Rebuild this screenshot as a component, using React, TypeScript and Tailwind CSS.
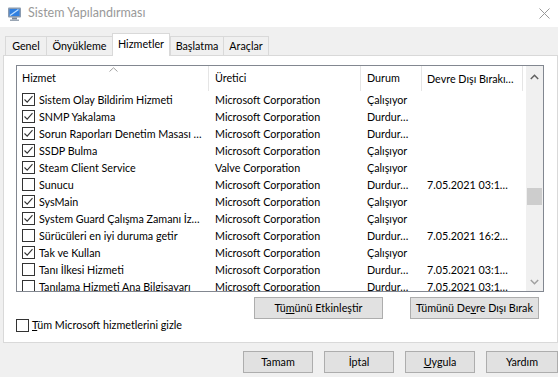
const rows: [boolean, string, string, string, string][] = [
  [true, "Sistem Olay Bildirim Hizmeti", "Microsoft Corporation", "Çalışıyor", ""],
  [true, "SNMP Yakalama", "Microsoft Corporation", "Durdur…", ""],
  [true, "Sorun Raporları Denetim Masası …", "Microsoft Corporation", "Durdur…", ""],
  [true, "SSDP Bulma", "Microsoft Corporation", "Çalışıyor", ""],
  [true, "Steam Client Service", "Valve Corporation", "Çalışıyor", ""],
  [false, "Sunucu", "Microsoft Corporation", "Durdur…", "7.05.2021 03:1…"],
  [true, "SysMain", "Microsoft Corporation", "Çalışıyor", ""],
  [true, "System Guard Çalışma Zamanı İz…", "Microsoft Corporation", "Çalışıyor", ""],
  [false, "Sürücüleri en iyi duruma getir", "Microsoft Corporation", "Durdur…", "7.05.2021 16:2…"],
  [true, "Tak ve Kullan", "Microsoft Corporation", "Çalışıyor", ""],
  [false, "Tanı İlkesi Hizmeti", "Microsoft Corporation", "Durdur…", "7.05.2021 03:1…"],
  [false, "Tanılama Hizmeti Ana Bilgisayarı", "Microsoft Corporation", "Durdur…", "7.05.2021 03:1…"],
];

function CheckBox({ checked }: { checked: boolean }) {
  return (
    <div className="w-[13px] h-[13px] border border-[#333333] bg-white flex items-center justify-center shrink-0">
      {checked && (
        <svg width="11" height="11" viewBox="0 0 11 11">
          <path d="M1.5 5.5 L4.2 8.2 L9.5 2.2" fill="none" stroke="#333333" strokeWidth="1.1" />
        </svg>
      )}
    </div>
  );
}

function Tab({ label, w, active }: { label: string; w: string; active?: boolean }) {
  if (active) {
    return (
      <div className={`${w} h-[23px] -mb-px relative z-10 bg-white border border-b-0 border-[#d9d9d9] flex items-center justify-center pb-[2px]`}>
        {label}
      </div>
    );
  }
  return (
    <div className={`${w} h-[19px] bg-[#f0f0f0] border border-b-0 border-r-0 last:border-r border-[#d9d9d9] flex items-center justify-center`}>
      {label}
    </div>
  );
}

function Button({ children, w }: { children: React.ReactNode; w: string }) {
  return (
    <div className={`${w} h-[22px] bg-[#e1e1e1] border border-[#adadad] flex items-center justify-center shrink-0 whitespace-nowrap`}>
      {children}
    </div>
  );
}

export default function App() {
  return (
    <div className="w-[558px] h-[377px] bg-[#f0f0f0] flex flex-col overflow-hidden text-[10.75px] text-black leading-none font-['Lato',sans-serif]">
      {/* Title bar */}
      <div className="h-[27px] bg-white flex items-center shrink-0">
        <svg className="ml-[7px]" width="16" height="16" viewBox="0 0 16 16">
          <rect x="1" y="1.5" width="13" height="10" rx="1" fill="#8a9bb0" />
          <rect x="2.5" y="3" width="10" height="7" fill="#2f7fe0" />
          <path d="M3 9.5 L11.5 3.5" stroke="#bfe0ff" strokeWidth="1.2" />
          <rect x="5" y="11.5" width="5" height="2" fill="#7a8797" />
          <rect x="3" y="13.5" width="9" height="1.5" fill="#9aa6b4" />
        </svg>
        <span className="ml-[5px] text-[12.5px] text-[#999999]">Sistem Yapılandırması</span>
        <svg className="ml-auto mr-[8px]" width="11" height="11" viewBox="0 0 11 11">
          <path d="M0.5 0.5 L10.5 10.5 M10.5 0.5 L0.5 10.5" stroke="#999999" strokeWidth="1" />
        </svg>
      </div>

      {/* Tabs */}
      <div className="flex items-end pl-[5px] pt-[6px] shrink-0">
        <Tab label="Genel" w="w-[41px]" />
        <Tab label="Önyükleme" w="w-[66px]" />
        <Tab label="Hizmetler" w="w-[58px]" active />
        <Tab label="Başlatma" w="w-[53px]" />
        <Tab label="Araçlar" w="w-[46px]" />
      </div>

      {/* Panel */}
      <div className="ml-[3px] w-[555px] h-[288px] bg-white border border-[#d9d9d9] flex flex-col pl-[12px] pt-[9px] shrink-0">
        {/* List */}
        <div className="w-[528px] h-[227px] border border-[#828790] flex overflow-hidden shrink-0">
          <div className="w-[509px] flex flex-col">
            <div className="h-[25px] flex shrink-0">
              <div className="w-[192px] border-r border-[#e5e5e5] flex items-center pl-[5px] relative">
                Hizmet
                <svg className="absolute left-[92px] top-[1px]" width="9" height="5" viewBox="0 0 9 5">
                  <path d="M0.5 4.5 L4.5 0.8 L8.5 4.5" fill="none" stroke="#a0a0a0" strokeWidth="1" />
                </svg>
              </div>
              <div className="w-[152px] border-r border-[#e5e5e5] flex items-center pl-[6px]">Üretici</div>
              <div className="w-[61px] border-r border-[#e5e5e5] flex items-center pl-[6px]">Durum</div>
              <div className="w-[101px] border-r border-[#e5e5e5] flex items-center pl-[5px] whitespace-nowrap overflow-hidden leading-[17px]">Devre Dışı Bırakı…</div>
            </div>
            {rows.map(([c, name, maker, state, date]) => (
              <div key={name} className="h-[17px] flex items-center shrink-0 whitespace-nowrap leading-[17px]">
                <div className="w-[192px] flex items-center pl-[5px] gap-[4px] overflow-hidden">
                  <CheckBox checked={c} />
                  <span>{name}</span>
                </div>
                <div className="w-[152px] pl-[6px] overflow-hidden">{maker}</div>
                <div className="w-[61px] pl-[6px] overflow-hidden">{state}</div>
                <div className="w-[101px] pl-[5px] overflow-hidden">{date}</div>
              </div>
            ))}
          </div>
          {/* Scrollbar */}
          <div className="ml-auto w-[17px] bg-[#f0f0f0] flex flex-col items-center">
            <div className="h-[17px] flex items-center justify-center mt-[2px]">
              <svg width="9" height="6" viewBox="0 0 9 6">
                <path d="M0.8 5 L4.5 1.3 L8.2 5" fill="none" stroke="#606060" strokeWidth="1.5" />
              </svg>
            </div>
            <div className="mt-[103px] w-[15px] h-[17px] bg-[#cdcdcd]" />
            <div className="mt-auto h-[17px] flex items-center justify-center mb-[1px]">
              <svg width="9" height="6" viewBox="0 0 9 6">
                <path d="M0.8 1 L4.5 4.7 L8.2 1" fill="none" stroke="#a0a0a0" strokeWidth="1.5" />
              </svg>
            </div>
          </div>
        </div>

        {/* Enable / disable buttons */}
        <div className="flex mt-[5px] pl-[238px] gap-[27px]">
          <Button w="w-[129px]">
            <span>Tü<u>m</u>ünü Etkinleştir</span>
          </Button>
          <Button w="w-[129px]">
            <span>Tümünü De<u>v</u>re Dışı Bırak</span>
          </Button>
        </div>

        <div className="flex items-center gap-[3px] mt-0">
          <CheckBox checked={false} />
          <span>
            <u>T</u>üm Microsoft hizmetlerini gizle
          </span>
        </div>
      </div>

      {/* Dialog buttons */}
      <div className="flex pl-[243px] pt-[8px] gap-[11px]">
        <Button w="w-[70px]">Tamam</Button>
        <Button w="w-[70px]">İptal</Button>
        <Button w="w-[70px]">
          <span>
            <u>U</u>ygula
          </span>
        </Button>
        <Button w="w-[72px]">Yardım</Button>
      </div>
    </div>
  );
}
